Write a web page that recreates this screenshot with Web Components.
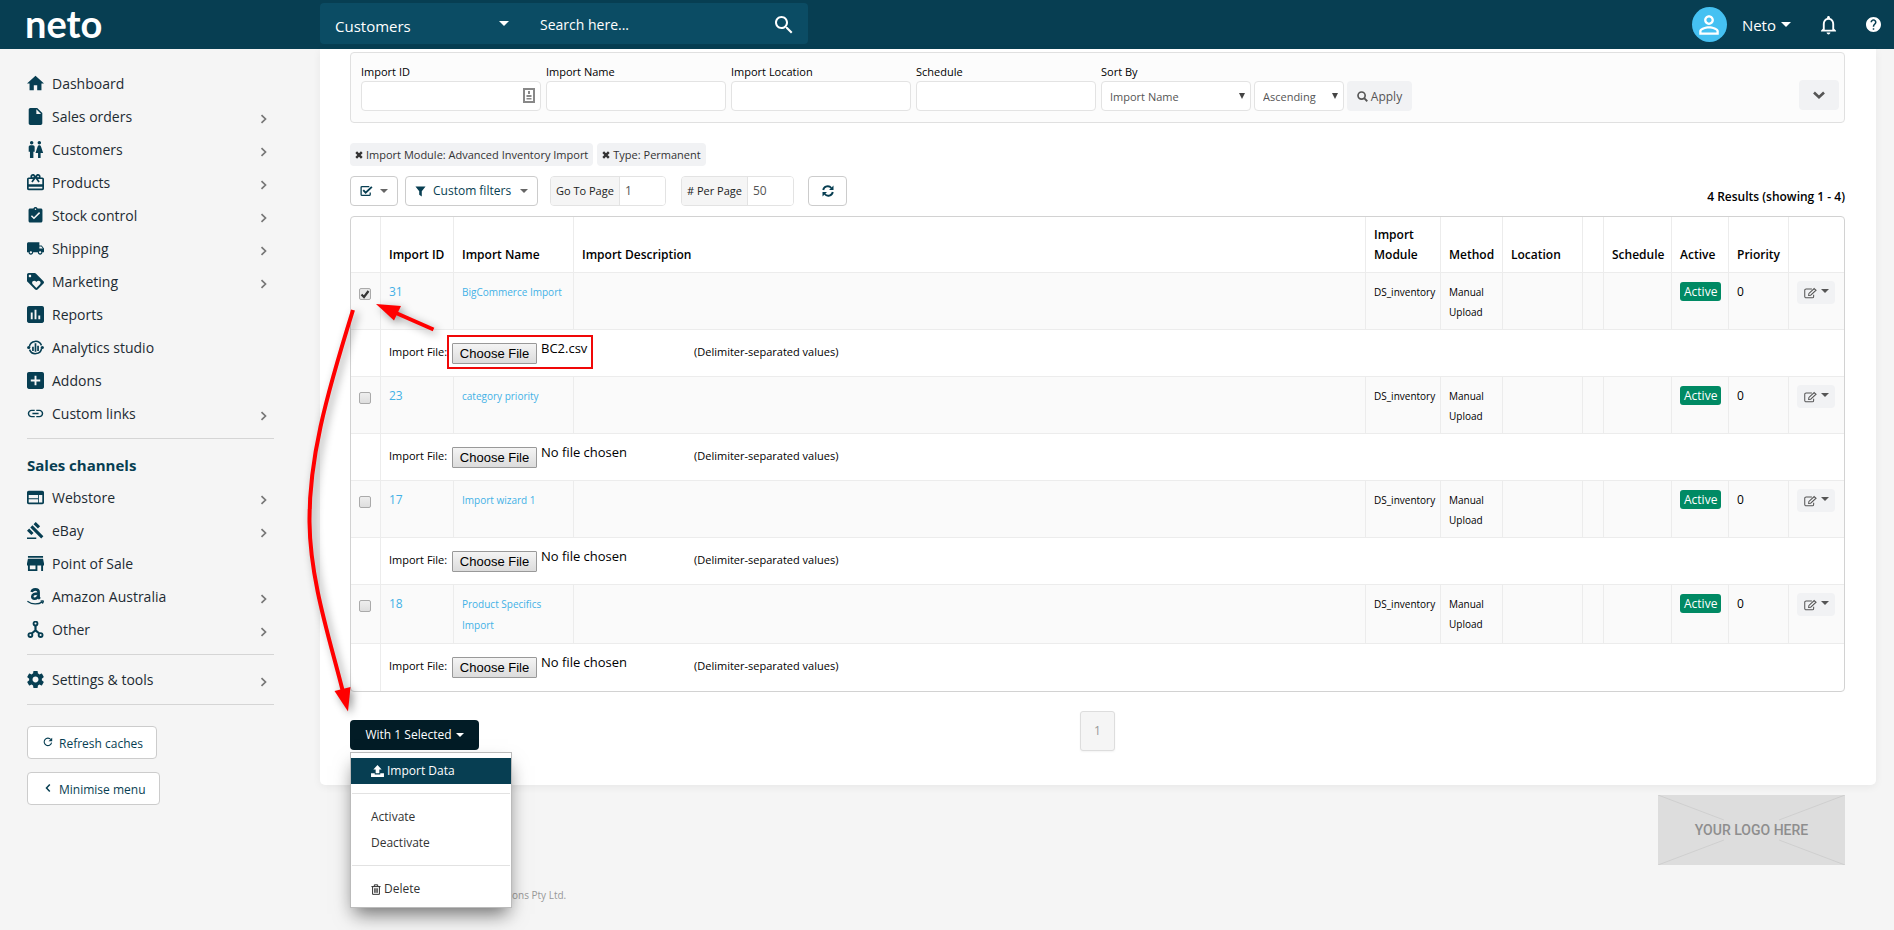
<!DOCTYPE html>
<html lang="en">
<head>
<meta charset="utf-8">
<title>Neto - Import Data</title>
<style>
html { background: #f5f5f5; }
body { margin: 0; font: 12px/20px "Open Sans", "Noto Sans", sans-serif; color: #000; }
</style>
</head>
<body>
<neto-app></neto-app>
<script>
const RESET = `
  *, *::before, *::after { box-sizing: border-box; }
  button, input, select { font: inherit; color: inherit; margin: 0; }
  button { cursor: pointer; }
  a { color: inherit; text-decoration: none; }
  .caret { display: inline-block; border: 5px solid transparent; border-top-color: currentColor; border-bottom: 0; flex: none; }
`;
function define(name, css, html, setup) {
  const template = document.createElement('template');
  template.innerHTML = `<style>${RESET}${css}</style>${typeof html === 'string' ? html : ''}`;
  customElements.define(name, class extends HTMLElement {
    constructor() {
      super();
      this.attachShadow({ mode: 'open' }).append(template.content.cloneNode(true));
    }
    connectedCallback() {
      if (this.ready) return;
      this.ready = true;
      if (typeof html === 'function') this.shadowRoot.innerHTML += html(this);
      if (setup) setup(this.shadowRoot, this);
    }
  });
}

/* name: [viewBox, markup] */
const ICONS = {
  home: ['2 2 20 20', '<path d="M10 20v-6h4v6h5v-8h3L12 3 2 12h3v8z"/>'],
  file: ['2 2 20 20', '<path d="M6 2c-1.1 0-1.99.9-1.99 2L4 20c0 1.1.89 2 1.99 2H18c1.1 0 2-.9 2-2V8l-6-6H6zm7 7V3.5L18.5 9H13z"/>'],
  people: ['2 2 20 20', '<path d="M5.5 22v-7.5H4V9c0-1.1.9-2 2-2h3c1.1 0 2 .9 2 2v5.5H9.500V22h-4zM18 22v-6h3l-2.540-7.630C18.180 7.550 17.420 7 16.560 7h-.12c-.86 0-1.63.55-1.900 1.370L12 16h3v6h3zM7.500 6c1.110 0 2-.89 2-2s-.89-2-2-2-2 .89-2 2 .89 2 2 2zm9 0c1.110 0 2-.89 2-2s-.89-2-2-2-2 .89-2 2 .89 2 2 2z"/>'],
  gift: ['2 2 20 20', '<path d="M20 6h-2.180c.11-.31.18-.65.18-1 0-1.660-1.340-3-3-3-1.050 0-1.960.54-2.500 1.350l-.5.67-.5-.68C10.960 2.540 10.050 2 9 2 7.340 2 6 3.340 6 5c0 .35.07.69.18 1H4c-1.110 0-1.990.89-1.990 2L2 19c0 1.110.89 2 2 2h16c1.110 0 2-.89 2-2V8c0-1.110-.89-2-2-2zm-5-2c.55 0 1 .45 1 1s-.45 1-1 1-1-.45-1-1 .45-1 1-1zM9 4c.55 0 1 .45 1 1s-.45 1-1 1-1-.45-1-1 .45-1 1-1zm11 15H4v-2h16v2zm0-5H4V8h5.080L7 10.830 8.620 12 11 8.760l1-1.360 1 1.360L15.380 12 17 10.830 14.920 8H20v6z"/>'],
  stock: ['1 1 22 22', '<path d="M19 3h-4.180C14.400 1.840 13.300 1 12 1c-1.300 0-2.400.84-2.820 2H5c-1.100 0-2 .9-2 2v14c0 1.100.9 2 2 2h14c1.100 0 2-.9 2-2V5c0-1.100-.9-2-2-2zm-7 0c.55 0 1 .45 1 1s-.45 1-1 1-1-.45-1-1 .45-1 1-1zm-2 14l-4-4 1.410-1.410L10 14.170l6.590-6.590L18 9l-8 8z"/>'],
  truck: ['1 1 22 22', '<path d="M20 8h-3V4H3c-1.100 0-2 .9-2 2v11h2c0 1.660 1.340 3 3 3s3-1.340 3-3h6c0 1.660 1.340 3 3 3s3-1.340 3-3h2v-5l-3-4zM6 18.500c-.83 0-1.500-.67-1.500-1.500s.67-1.500 1.500-1.500 1.500.67 1.500 1.500-.67 1.500-1.500 1.500zm13.500-9l1.960 2.500H17V9.500h2.500zm-1.500 9c-.83 0-1.500-.67-1.500-1.500s.67-1.500 1.500-1.500 1.500.67 1.500 1.500-.67 1.500-1.500 1.500z"/>'],
  tag: ['2 2 20 20', '<path d="M21.410 11.580l-9-9C12.050 2.220 11.550 2 11 2H4c-1.100 0-2 .9-2 2v7c0 .55.22 1.050.59 1.420l9 9c.36.36.86.58 1.410.58.55 0 1.050-.22 1.410-.59l7-7c.37-.36.59-.86.59-1.410 0-.55-.23-1.060-.59-1.420zM5.500 7C4.670 7 4 6.330 4 5.500S4.670 4 5.500 4 7 4.670 7 5.500 6.330 7 5.500 7zm11.770 8.270L13 19.540l-4.270-4.270C8.280 14.810 8 14.190 8 13.500c0-1.380 1.120-2.500 2.500-2.500.69 0 1.320.28 1.770.74l.73.72.73-.73c.45-.45 1.080-.73 1.770-.73 1.380 0 2.500 1.120 2.500 2.500 0 .69-.28 1.320-.73 1.770z"/>'],
  chart: ['3 3 18 18', '<path d="M19 3H5c-1.100 0-2 .9-2 2v14c0 1.100.9 2 2 2h14c1.100 0 2-.9 2-2V5c0-1.100-.9-2-2-2zM9 17H7v-7h2v7zm4 0h-2V7h2v10zm4 0h-2v-4h2v4z"/>'],
  analytics: ['0 0 20 20', '<g fill="none" stroke="currentColor" stroke-width="1.800"><path d="M2.800 9A7.400 7.400 0 0 1 17 7.500M17.200 11A7.400 7.400 0 0 1 3 12.500"/></g><circle cx="2" cy="10" r="1.900"/><circle cx="18" cy="10" r="1.900"/><path d="M6 9h2v5H6zM9 5h2v10H9zM12 8h2v6h-2z"/>'],
  plus: ['3 3 18 18', '<path d="M19 3H5c-1.110 0-2 .9-2 2v14c0 1.100.89 2 2 2h14c1.100 0 2-.9 2-2V5c0-1.100-.9-2-2-2zm-2 10h-4v4h-2v-4H7v-2h4V7h2v4h4v2z"/>'],
  link: ['1 1 22 22', '<path d="M3.900 12c0-1.710 1.390-3.100 3.100-3.100h4V7H7c-2.760 0-5 2.240-5 5s2.240 5 5 5h4v-1.900H7c-1.710 0-3.100-1.390-3.100-3.100zM8 13h8v-2H8v2zm9-6h-4v1.900h4c1.710 0 3.100 1.390 3.100 3.100s-1.390 3.100-3.100 3.100h-4V17h4c2.760 0 5-2.240 5-5s-2.240-5-5-5z"/>'],
  web: ['2 2 20 20', '<path d="M20 4H4c-1.100 0-1.990.9-1.990 2L2 18c0 1.100.9 2 2 2h16c1.100 0 2-.9 2-2V6c0-1.100-.9-2-2-2zm-5 14H4v-4h11v4zm0-5H4V9h11v4zm5 5h-4V9h4v9z"/>'],
  gavel: ['1 1 22 22', '<path d="M1 21h12v2H1zM5.245 8.070l2.830-2.827 14.140 14.142-2.828 2.828zM12.317 1l5.657 5.656-2.830 2.830-5.654-5.660zM3.825 9.485l5.657 5.657-2.828 2.828-5.657-5.657z"/>'],
  store: ['3 3 18 18', '<path d="M20 4H4v2h16V4zm1 10v-2l-1-5H4l-1 5v2h1v6h10v-6h4v6h2v-6h1zm-9 4H6v-4h6v4z"/>'],
  amazon: ['0 0 20 20', '<g fill="none" stroke="currentColor"><path stroke-width="3" d="M5.500 4.800C6 2.300 7.500 1.600 9.800 1.600c2.800 0 3.900 1.200 3.900 3.400v5.300c0 1 .6 1.700 1.400 2.600"/><path stroke-width="3" d="M13 6.400c-4 0-6.800.9-6.800 3.600 0 1.600 1 2.600 2.600 2.600 2.300 0 4.200-1.700 4.200-4.200"/><path stroke-width="1.500" d="M.5 15.500c5.500 4.200 12.500 4.200 17.500.8M16 15.500c2-.6 3.500-.6 3.200.3-.2 1-.6 1.900-1.200 2.500"/></g>'],
  nodes: ['2 2 20 20', '<g fill="none" stroke="currentColor" stroke-width="2.200"><circle cx="12" cy="5" r="2.300"/><circle cx="6" cy="18.500" r="2.300"/><circle cx="18" cy="18.500" r="2.300"/><path stroke-width="2.600" d="M12 7.300V13L7.500 16.700M12 13l4.500 3.700"/></g>'],
  gear: ['2 2 20 20', '<path d="M19.430 12.980c.04-.32.07-.64.07-.98s-.03-.66-.07-.98l2.110-1.650c.19-.15.24-.42.12-.64l-2-3.460c-.12-.22-.39-.3-.61-.22l-2.490 1c-.52-.4-1.080-.73-1.690-.98l-.38-2.650C14.460 2.180 14.250 2 14 2h-4c-.25 0-.46.18-.49.42l-.38 2.650c-.61.25-1.170.59-1.690.98l-2.490-1c-.23-.09-.49 0-.61.22l-2 3.460c-.13.22-.07.49.12.64l2.110 1.650c-.04.32-.07.65-.07.98s.03.66.07.98l-2.110 1.650c-.19.15-.24.42-.12.64l2 3.460c.12.22.39.3.61.22l2.490-1c.52.4 1.080.73 1.690.98l.38 2.650c.03.24.24.42.49.42h4c.25 0 .46-.18.49-.42l.38-2.650c.61-.25 1.170-.59 1.690-.98l2.490 1c.23.09.49 0 .61-.22l2-3.460c.12-.22.07-.49-.12-.64l-2.110-1.650zM12 15.500c-1.930 0-3.500-1.570-3.500-3.500s1.570-3.500 3.500-3.500 3.500 1.570 3.500 3.500-1.570 3.500-3.500 3.500z"/>'],
  search: ['3 3 18 18', '<path d="M15.500 14h-.79l-.28-.27C15.410 12.590 16 11.110 16 9.500 16 5.910 13.090 3 9.500 3S3 5.910 3 9.500 5.910 16 9.500 16c1.610 0 3.090-.59 4.230-1.570l.27.28v.79l5 4.990L20.490 19l-4.990-5zm-6 0C7.010 14 5 11.990 5 9.500S7.010 5 9.500 5 14 7.010 14 9.500 11.990 14 9.500 14z"/>'],
  bell: ['3 2 18 20', '<path d="M12 22c1.100 0 2-.9 2-2h-4c0 1.100.9 2 2 2zm6-6v-5c0-3.070-1.630-5.640-4.500-6.320V4c0-.83-.67-1.500-1.500-1.500s-1.500.67-1.500 1.500v.68C7.640 5.360 6 7.920 6 11v5l-2 2v1h16v-1l-2-2zm-2 1H8v-6c0-2.480 1.510-4.500 4-4.500s4 2.020 4 4.500v6z"/>'],
  help: ['2 2 20 20', '<path d="M12 2C6.480 2 2 6.480 2 12s4.480 10 10 10 10-4.480 10-10S17.520 2 12 2zm1 17h-2v-2h2v2zm2.070-7.750l-.9.92C13.450 12.900 13 13.500 13 15h-2v-.5c0-1.100.45-2.100 1.170-2.830l1.240-1.260c.37-.36.59-.86.59-1.410 0-1.100-.9-2-2-2s-2 .9-2 2H8c0-2.210 1.790-4 4-4s4 1.790 4 4c0 .88-.36 1.680-.93 2.250z"/>'],
  person: ['3 3 18 18', '<path d="M12 5.900c1.160 0 2.100.94 2.100 2.100s-.94 2.100-2.100 2.100S9.900 9.160 9.900 8s.94-2.100 2.100-2.100m0 9c2.970 0 6.100 1.460 6.100 2.100v1.100H5.900V17c0-.64 3.130-2.100 6.100-2.100M12 4C9.790 4 8 5.790 8 8s1.790 4 4 4 4-1.790 4-4-1.790-4-4-4zm0 9c-2.670 0-8 1.340-8 4v3h16v-3c0-2.660-5.330-4-8-4z"/>'],
  right: ['0 0 10 10', '<path fill="none" stroke="currentColor" stroke-width="1.700" d="M2.500 1.200L6.500 5l-4 3.800"/>'],
  left: ['0 0 10 10', '<path fill="none" stroke="currentColor" stroke-width="1.500" d="M6.800 1.500L3.500 5l3.300 3.500"/>'],
  down: ['0 0 12 12', '<path fill="none" stroke="currentColor" stroke-width="2.600" d="M1 3.500l5 4.800 5-4.800"/>'],
  reload: ['0 0 12 12', '<path fill="none" stroke="currentColor" stroke-width="1.300" d="M10.300 6.800A4.500 4.500 0 1 1 9.400 3"/><path d="M11 .8v4.400H6.600z"/>'],
  sync: ['0 0 12 12', '<g fill="none" stroke="currentColor" stroke-width="1.900"><path d="M1.200 5A4.600 4.600 0 0 1 9.300 3M10.800 7A4.600 4.600 0 0 1 2.700 9"/></g><path d="M11.500.5V5H7zM.5 11.500V7H5z"/>'],
  times: ['0 0 10 10', '<path fill="none" stroke="currentColor" stroke-width="3" d="M1.500 1.500l7 7M8.500 1.500l-7 7"/>'],
  checkbox: ['0 0 14 12', '<path fill="none" stroke="currentColor" stroke-width="1.400" d="M10 1.200H2.200a1 1 0 0 0-1 1v7.600a1 1 0 0 0 1 1H10a1 1 0 0 0 1-1V7.500"/><path fill="none" stroke="currentColor" stroke-width="2" d="M3.500 5l2.600 2.800L12.800 1.500"/>'],
  funnel: ['0 0 12 12', '<path d="M.5.5h11L7.400 5.600V11.500L4.600 9.600v-4z"/>'],
  find: ['0 0 12 12', '<circle cx="5" cy="5" r="3.900" fill="none" stroke="currentColor" stroke-width="1.800"/><path stroke="currentColor" stroke-width="2" d="M7.800 7.800l3.400 3.400"/>'],
  edit: ['0 0 14 12', '<path fill="none" stroke="currentColor" stroke-width="1.100" d="M8.500 1.600H2.300A1.500 1.500 0 0 0 .8 3.100v6.600a1.500 1.500 0 0 0 1.500 1.500h6.600a1.500 1.500 0 0 0 1.500-1.500V7.800"/><path fill="none" stroke="currentColor" stroke-width="1.100" d="M11 1.200l2 1.800-5.800 5.400-2.200.3.300-2.200z"/>'],
  upload: ['0 0 14 13', '<path d="M7 0l4.500 5H9v4H5V5H2.500zM0 9h4v1.300h6V9h4v4H0z"/>'],
  trash: ['0 0 12 13', '<g fill="none" stroke="currentColor" stroke-width="1.200"><path d="M.5 3h11M4 2.800V.9h4v1.900M1.900 3v9.300h8.200V3M4.500 5v5.500M6 5v5.500M7.500 5v5.500"/></g>'],
  card: ['0 0 12 15', '<path fill="#fff" stroke="#888" stroke-width="2" d="M1 1h10v13H1z"/><path fill="#888" d="M5 3h2v3H5zM3.500 7h5v2h-5zM3.500 10h5v1.500h-5z"/>']
};
define('neto-icon', `
  :host { display: inline-flex; flex: none; width: 17px; height: 17px; }
  svg { width: 100%; height: 100%; fill: currentColor; display: block; }
`, el => {
  const [box, body] = ICONS[el.getAttribute('name')];
  return `<svg viewBox="${box}" aria-hidden="true">${body}</svg>`;
});

define('neto-topbar', `
  :host { display: flex; align-items: center; height: 49px; background: #073e52; color: #fff; font-size: 15px; padding-right: 13px; }
  .brand { width: 320px; height: 49px; padding-left: 25px; font: 700 38px/46px Lato, sans-serif; flex: none; }
  form { display: flex; align-items: center; width: 488px; height: 41px; margin-bottom: 2px; border-radius: 4px; background: #0b4c64; }
  .pick { position: relative; display: flex; align-items: center; width: 205px; height: 41px; }
  .pick select { appearance: none; width: 100%; height: 41px; padding: 4px 30px 0 15px; border: 0; background: none; }
  .pick .caret { position: absolute; right: 16px; pointer-events: none; }
  option { color: #222; }
  input { flex: 1; min-width: 0; height: 41px; border: 0; background: none; padding: 2px 15px 0; font-size: 14px; }
  input::placeholder { color: #fff; opacity: 1; }
  form button { border: 0; background: none; padding: 2px 15px 0; display: flex; color: #fff; }
  form neto-icon { width: 18px; height: 18px; }
  .account { margin-left: auto; display: flex; align-items: center; border: 0; background: none; padding: 0; color: #fff; font-size: 15px; }
  .avatar { width: 35px; height: 35px; border-radius: 50%; background: #45c1f2; display: flex; align-items: center; justify-content: center; margin-right: 15px; }
  .avatar neto-icon { width: 22px; height: 22px; }
  .account .caret { margin-left: 5px; }
  .tool { border: 0; background: none; padding: 0; color: #fff; display: flex; margin-left: 29px; }
  .bell { width: 17px; height: 20px; }
  .tool .help { width: 15px; height: 15px; }
`, `
  <a class="brand" href="#">neto</a>
  <form role="search">
    <span class="pick"><select aria-label="Search in"><option>Customers</option><option>Products</option><option>Sales orders</option></select><span class="caret"></span></span>
    <input type="text" placeholder="Search here..." aria-label="Search">
    <button type="button" aria-label="Search"><neto-icon name="search"></neto-icon></button>
  </form>
  <button class="account"><span class="avatar"><neto-icon name="person"></neto-icon></span>Neto<span class="caret"></span></button>
  <button class="tool" aria-label="Notifications"><neto-icon class="bell" name="bell"></neto-icon></button>
  <button class="tool" aria-label="Help"><neto-icon class="help" name="help"></neto-icon></button>
`);

define('nav-item', `
  :host { display: block; }
  a { display: flex; align-items: center; height: 33px; padding-top: 1px; color: #1d2b33; }
  .lead { color: #073e52; margin: 0 8px 2px 0; }
  .more { margin: 4px 5px 0 auto; width: 10px; height: 10px; color: #777; }
`, el => `<a href="#"><neto-icon class="lead" name="${el.getAttribute('icon')}"></neto-icon><slot></slot>${el.hasAttribute('more') ? '<neto-icon class="more" name="right"></neto-icon>' : ''}</a>`);

define('neto-sidebar', `
  :host { display: block; width: 247px; margin: 18px 46px 0 27px; font-size: 14px; }
  hr { border: 0; border-top: 1px solid #d5d5d5; margin: 8px 0; }
  h2 { margin: 0; padding: 7px 0 5px; font-size: 15px; line-height: 22px; font-weight: 700; color: #073e52; }
  .actions { display: flex; flex-direction: column; align-items: flex-start; gap: 13px; margin-top: 21px; }
  .actions button { display: flex; align-items: center; gap: 6px; height: 33px; padding: 2px 13px 0 15px; border: 1px solid #ccc; border-radius: 4px; background: #fff; color: #073e52; font-size: 12px; }
  .actions neto-icon { width: 10px; height: 10px; margin-bottom: 4px; }
`, `
  <nav aria-label="Main">
    <nav-item icon="home">Dashboard</nav-item>
    <nav-item icon="file" more>Sales orders</nav-item>
    <nav-item icon="people" more>Customers</nav-item>
    <nav-item icon="gift" more>Products</nav-item>
    <nav-item icon="stock" more>Stock control</nav-item>
    <nav-item icon="truck" more>Shipping</nav-item>
    <nav-item icon="tag" more>Marketing</nav-item>
    <nav-item icon="chart">Reports</nav-item>
    <nav-item icon="analytics">Analytics studio</nav-item>
    <nav-item icon="plus">Addons</nav-item>
    <nav-item icon="link" more>Custom links</nav-item>
    <hr>
    <h2>Sales channels</h2>
    <nav-item icon="web" more>Webstore</nav-item>
    <nav-item icon="gavel" more>eBay</nav-item>
    <nav-item icon="store">Point of Sale</nav-item>
    <nav-item icon="amazon" more>Amazon Australia</nav-item>
    <nav-item icon="nodes" more>Other</nav-item>
    <hr>
    <nav-item icon="gear" more>Settings &amp; tools</nav-item>
    <hr>
  </nav>
  <div class="actions">
    <button><neto-icon name="reload"></neto-icon>Refresh caches</button>
    <button><neto-icon name="left"></neto-icon>Minimise menu</button>
  </div>
`);

define('filter-panel', `
  :host { display: flex; align-items: flex-end; gap: 5px; height: 71px; padding: 0 5px 11px 10px; border: 1px solid #e0e0e0; border-radius: 4px; background: #fcfcfc; }
  .field { display: flex; flex-direction: column; width: 180px; font-size: 11px; line-height: 18px; }
  .box { position: relative; display: flex; }
  input, select { width: 100%; height: 30px; border: 1px solid #e3e3e3; border-radius: 4px; background: #fff; padding: 2px 8px 0; color: #555; }
  select { appearance: none; font-size: 11px; }
  .box neto-icon { position: absolute; right: 6px; top: 7px; width: 12px; height: 15px; }
  .sel .caret { position: absolute; right: 6px; top: 12px; border-width: 6px 3px 0; color: #444; pointer-events: none; }
  .sort { width: 150px; }
  .dir { width: 90px; margin-left: -2px; }
  button { display: flex; align-items: center; justify-content: center; gap: 3px; height: 30px; border: 0; border-radius: 4px; background: #f1f2f4; color: #555; font-size: 12px; }
  .apply { width: 65px; margin-left: -2px; padding-top: 2px; }
  .apply neto-icon { width: 11px; height: 11px; }
  .toggle { width: 40px; margin: 0 0 1px auto; }
  .toggle neto-icon { width: 12px; height: 12px; }
`, `
  <div class="field"><label for="fid">Import ID</label><div class="box"><input id="fid" type="text"><neto-icon name="card"></neto-icon></div></div>
  <div class="field"><label for="fname">Import Name</label><div class="box"><input id="fname" type="text"></div></div>
  <div class="field"><label for="floc">Import Location</label><div class="box"><input id="floc" type="text"></div></div>
  <div class="field"><label for="fsch">Schedule</label><div class="box"><input id="fsch" type="text"></div></div>
  <div class="field sort"><label for="fsort">Sort By</label><div class="box sel"><select id="fsort"><option>Import Name</option></select><span class="caret"></span></div></div>
  <div class="field dir"><div class="box sel"><select aria-label="Sort direction"><option>Ascending</option><option>Descending</option></select><span class="caret"></span></div></div>
  <button class="apply"><neto-icon name="find"></neto-icon>Apply</button>
  <button class="toggle" aria-label="More filters"><neto-icon name="down"></neto-icon></button>
`);

define('filter-tag', `
  :host { display: inline-flex; }
  button { display: flex; align-items: center; gap: 3px; height: 23px; padding: 0 5px; border: 0; border-radius: 4px; background: #f1f2f4; color: #333; font-size: 11px; }
  neto-icon { width: 8px; height: 8px; }
`, `<button><neto-icon name="times"></neto-icon><slot></slot></button>`);

define('list-toolbar', `
  :host { display: flex; align-items: center; height: 30px; }
  .btn { display: flex; align-items: center; height: 30px; border: 1px solid #ccc; border-radius: 4px; background: #fff; color: #073e52; font-size: 12px; }
  .btn .caret { color: #666; border-width: 4px 4px 0; margin-left: auto; }
  .pick { width: 48px; padding: 0 9px; margin-right: 7px; }
  .pick neto-icon { width: 13px; height: 12px; }
  .custom { width: 133px; padding: 0 9px; gap: 7px; margin-right: 12px; }
  .custom neto-icon { width: 11px; height: 11px; }
  .group { display: flex; width: 116px; height: 30px; border: 1px solid #e3e3e3; border-radius: 4px; overflow: hidden; margin-right: 15px; }
  .group label { display: flex; align-items: center; padding: 0 5px; background: #f5f5f5; border-right: 1px solid #e3e3e3; font-size: 11px; color: #222; white-space: nowrap; }
  .group input { flex: 1; min-width: 0; border: 0; padding: 0 5px; color: #555; font-size: 12px; }
  .group.per { width: 113px; margin-right: 14px; }
  .sync { width: 39px; justify-content: center; padding: 0; }
  .sync neto-icon { width: 12px; height: 12px; }
  p { margin: 12px 0 0 auto; font-weight: 600; }
`, `
  <button class="btn pick" aria-label="Select rows"><neto-icon name="checkbox"></neto-icon><span class="caret"></span></button>
  <button class="btn custom"><neto-icon name="funnel"></neto-icon>Custom filters<span class="caret"></span></button>
  <div class="group"><label for="page">Go To Page</label><input id="page" type="text" value="1"></div>
  <div class="group per"><label for="per"># Per Page</label><input id="per" type="text" value="50"></div>
  <button class="btn sync" aria-label="Reload"><neto-icon name="sync"></neto-icon></button>
  <p>4 Results (showing 1 - 4)</p>
`);

define('file-picker', `
  :host { display: flex; align-items: flex-start; gap: 4px; width: 242px; height: 26px; font-size: 13px; line-height: 20px; }
  button { height: 21px; width: 85px; margin-top: 5px; padding: 0; border: 1px solid #999; border-radius: 1px; background: linear-gradient(#f4f4f4, #dcdcdc); color: #000; font: 13px "Liberation Sans", sans-serif; }
`, el => `<button type="button">Choose File</button><span><slot></slot></span><input type="file" hidden aria-label="Import file">`,
(root) => {
  root.querySelector('button').addEventListener('click', () => root.querySelector('input').click());
});

const ROWS = [
  { id: 31, name: 'BigCommerce Import', file: 'BC2.csv', checked: true },
  { id: 23, name: 'category priority', file: 'No file chosen' },
  { id: 17, name: 'Import wizard 1', file: 'No file chosen' },
  { id: 18, name: 'Product Specifics Import', file: 'No file chosen' }
];
define('import-table', `
  :host { display: block; border: 1px solid #d2d2d2; border-radius: 4px; overflow: hidden; }
  table { width: 100%; table-layout: fixed; border-spacing: 0; }
  th, td { padding: 9px 0 7px 8px; border: 0 solid #ececec; border-width: 0 1px 1px 0; vertical-align: top; text-align: left; }
  th { height: 56px; padding: 8px 0 7px 8px; vertical-align: bottom; font-weight: 600; }
  tr > :last-child { border-right: 0; }
  tr:last-child > td { border-bottom: 0; }
  .item td { background: #fafafa; }
  .small { font-size: 10px; }
  td a { color: #43b1e6; }
  td.name { font-size: 10px; line-height: 21px; padding-right: 8px; }
  td.act { padding-top: 8px; }
  .file > td { height: 47px; padding: 8px 0 0 8px; }
  .line { display: flex; align-items: flex-start; font-size: 11px; white-space: nowrap; }
  .line > span { padding-top: 4px; width: 63px; }
  .line > em { padding-top: 4px; font-style: normal; }
  input { appearance: none; display: block; width: 12px; height: 12px; margin-top: 6px; border: 1px solid #aaa; border-radius: 2px; background: linear-gradient(#eee, #dedede); }
  input:checked { background: url("data:image/svg+xml,%3Csvg xmlns='http://www.w3.org/2000/svg' viewBox='0 0 10 10'%3E%3Cpath d='M1.500 5.500l2.500 2.500L8.500 2' fill='none' stroke='%23333' stroke-width='2.200'/%3E%3C/svg%3E") center / 10px no-repeat #e6e6e6; }
  .badge { display: inline-block; height: 19px; line-height: 19px; padding: 0 4px; border-radius: 3px; background: #008a64; color: #fff; vertical-align: top; }
  .edit { display: flex; align-items: center; justify-content: center; gap: 4px; width: 38px; height: 23px; padding: 0; border: 0; border-radius: 4px; background: #f1f2f4; color: #555; }
  .edit neto-icon { width: 13px; height: 12px; }
  .edit .caret { border-width: 4px 4px 0; margin-bottom: 3px; }
`, () => `
  <table>
    <colgroup><col style="width:30px"><col style="width:73px"><col style="width:120px"><col><col style="width:75px"><col style="width:62px"><col style="width:80px"><col style="width:21px"><col style="width:68px"><col style="width:57px"><col style="width:60px"><col style="width:55px"></colgroup>
    <thead><tr><th></th><th>Import ID</th><th>Import Name</th><th>Import Description</th><th>Import<br>Module</th><th>Method</th><th>Location</th><th></th><th>Schedule</th><th>Active</th><th>Priority</th><th></th></tr></thead>
    <tbody>${ROWS.map(r => `
      <tr class="item"><td><input type="checkbox" aria-label="Select import ${r.id}"${r.checked ? ' checked' : ''}></td><td><a href="#">${r.id}</a></td><td class="name"><a href="#">${r.name}</a></td><td></td><td class="small">DS_inventory</td><td class="small">Manual<br>Upload</td><td></td><td></td><td></td><td><span class="badge">Active</span></td><td>0</td><td class="act"><button class="edit" aria-label="Edit import ${r.id}"><neto-icon name="edit"></neto-icon><span class="caret"></span></button></td></tr>
      <tr class="file"><td></td><td colspan="11"><div class="line"><span>Import File:</span><file-picker>${r.file}</file-picker><em>(Delimiter-separated values)</em></div></td></tr>`).join('')}
    </tbody>
  </table>`);

define('bulk-menu', `
  :host { display: block; position: relative; }
  .open { display: flex; align-items: center; gap: 4px; height: 30px; width: 129px; justify-content: center; padding: 0; border: 0; border-radius: 4px; background: #021c26; color: #fff; white-space: nowrap; }
  .open .caret { border-width: 4px 4px 0; }
  ul { position: absolute; z-index: 2; left: 0; top: 32px; width: 162px; margin: 0; padding: 5px 0; list-style: none; border: 1px solid #bbb; background: #fff; box-shadow: 0 10px 18px -4px rgba(0,0,0,.55); color: #333; }
  li a { display: flex; align-items: center; gap: 3px; height: 26px; padding: 0 20px; }
  li.on a { background: #073e52; color: #fff; }
  li.on neto-icon { width: 13px; height: 12px; }
  .bin { width: 10px; height: 11px; }
  li[role=separator] { height: 1px; margin: 9px 1px 10px; background: #e2e2e2; }
`, `
  <button class="open" aria-expanded="true">With 1 Selected<span class="caret"></span></button>
  <ul>
    <li class="on"><a href="#"><neto-icon name="upload"></neto-icon>Import Data</a></li>
    <li role="separator"></li>
    <li><a href="#">Activate</a></li>
    <li><a href="#">Deactivate</a></li>
    <li role="separator"></li>
    <li><a href="#"><neto-icon class="bin" name="trash"></neto-icon>Delete</a></li>
  </ul>
`);

define('site-footer', `
  :host { display: flex; justify-content: space-between; align-items: flex-start; margin: 10px 31px 0 30px; padding-bottom: 24px; font-size: 10px; color: #999; }
  p { margin: 90px 0 0 162px; }
  .logo { position: relative; display: flex; align-items: center; justify-content: center; width: 187px; height: 70px; background: #ddd; color: #8e8e8e; font: 500 14px Roboto, sans-serif; }
  .logo svg { position: absolute; inset: 0; width: 100%; height: 100%; stroke: #cfcfcf; }
`, `
  <p>ons Pty Ltd.</p>
  <div class="logo"><svg viewBox="0 0 187 70" aria-hidden="true"><path d="M0 0l66 25M187 0l-66 25M0 70l66-25M187 70l-66-25"/></svg>YOUR LOGO HERE</div>
`);

define('markup-arrows', `
  :host { position: absolute; left: 0; top: 0; z-index: 3; pointer-events: none; }
  svg { display: block; overflow: visible; filter: drop-shadow(3px 3px 4px rgba(0,0,0,.4)); }
  .frame { filter: none; position: absolute; left: 0; top: 0; }
`, `
  <svg width="600" height="720" aria-hidden="true">
    <path d="M353 310C325 400 309 460 309.500 522C310 580 330 640 342.500 690" fill="none" stroke="#f00" stroke-width="4"/>
    <path d="M334.500 691L350.500 687L348 711.500z" fill="#f00"/>
    <path d="M433.500 329.500L396 313" fill="none" stroke="#f00" stroke-width="4"/>
    <path d="M376 304L401 306L394 320.500z" fill="#f00"/>
  </svg>
  <svg class="frame" width="600" height="720" aria-hidden="true"><rect x="448" y="336" width="144" height="32" fill="none" stroke="#f00808" stroke-width="2"/></svg>
`);

define('neto-app', `
  :host { display: block; position: relative; min-height: 100vh; overflow: hidden; }
  .body { display: flex; align-items: flex-start; }
  main { flex: 1; min-width: 0; margin-right: 18px; }
  .panel { background: #fff; border-radius: 0 0 5px 5px; padding: 3px 31px 34px 30px; box-shadow: 0 2px 8px rgba(0,0,0,.06); }
  .tags { display: flex; gap: 4px; margin: 20px 0 10px; }
  import-table { margin-top: 10px; }
  .foot { display: grid; grid-template-columns: 1fr auto 1fr; align-items: start; margin-top: 19px; }
  bulk-menu { margin-top: 9px; }
  .page { display: flex; align-items: center; justify-content: center; width: 35px; height: 40px; border: 1px solid #ddd; border-radius: 3px; background: #f5f5f5; color: #999; box-shadow: 0 1px 2px rgba(0,0,0,.05); }
`, `
  <neto-topbar></neto-topbar>
  <div class="body">
    <neto-sidebar></neto-sidebar>
    <main>
      <div class="panel">
        <filter-panel></filter-panel>
        <div class="tags"><filter-tag>Import Module: Advanced Inventory Import</filter-tag><filter-tag>Type: Permanent</filter-tag></div>
        <list-toolbar></list-toolbar>
        <import-table></import-table>
        <div class="foot"><bulk-menu></bulk-menu><a class="page" href="#" aria-current="page">1</a></div>
      </div>
      <site-footer></site-footer>
    </main>
  </div>
  <markup-arrows></markup-arrows>
`);
</script>
</body>
</html>
